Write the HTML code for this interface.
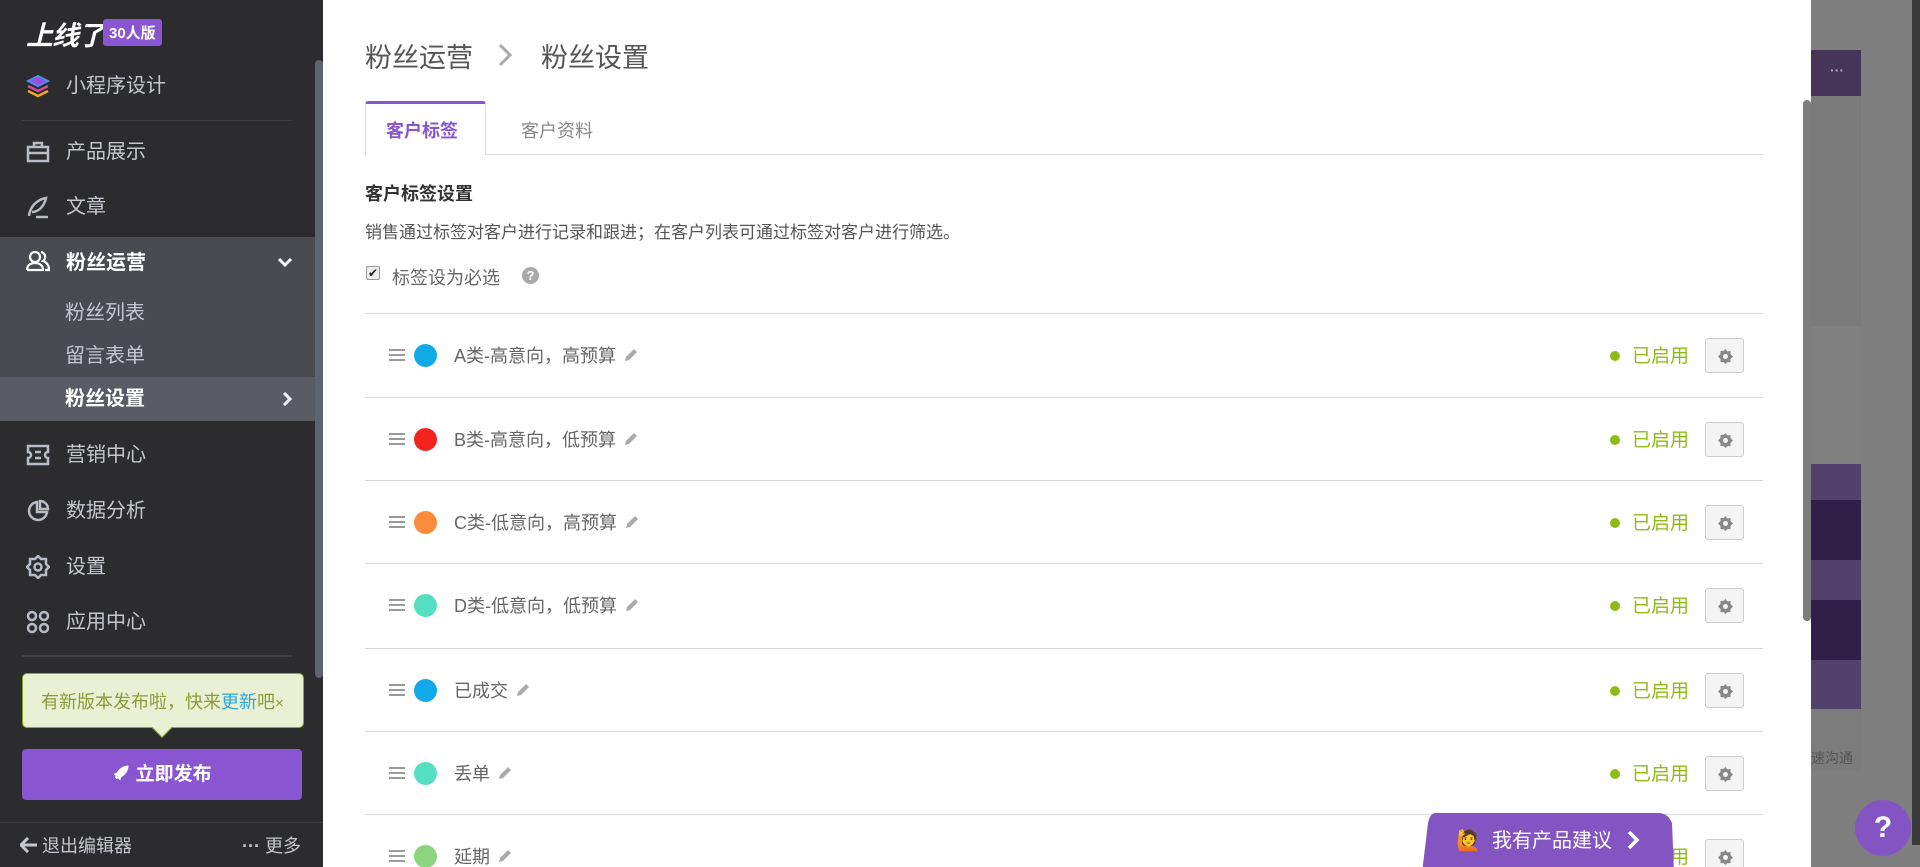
<!DOCTYPE html>
<html><head><meta charset="utf-8"><style>
*{margin:0;padding:0;box-sizing:border-box}
html,body{width:1920px;height:100%;min-height:867px;overflow:hidden;background:#7f7f7f}
body{font-family:"Liberation Sans","Noto Sans CJK SC",sans-serif;position:relative}
.a{position:absolute;white-space:nowrap}
#side{position:absolute;left:0;top:0;width:323px;height:100%;min-height:867px;background:#2c2c2e}
.mi{position:absolute;left:66px;font-size:20px;color:#c4c7ce;line-height:24px}
.ic{position:absolute;left:26px;width:24px;height:24px}
#main{position:absolute;left:323px;top:0;width:1488px;height:100%;min-height:867px;background:#fff}
.row{position:absolute;left:42px;width:1398px;height:83px;border-top:1px solid #d8d8d8}
.row .h{position:absolute;left:24px;top:35px;width:16px;height:12px;border-top:2px solid #9a9a9a;border-bottom:2px solid #9a9a9a}
.row .h:after{content:"";position:absolute;left:0;top:3px;width:16px;height:2px;background:#9a9a9a}
.row .c{position:absolute;left:49px;top:30px;width:23px;height:23px;border-radius:50%}
.row .t{position:absolute;left:89px;top:28px;font-size:18px;color:#666}
.row .t svg{vertical-align:-2px;margin-left:6px}
.row .dot{position:absolute;left:1245px;top:37px;width:10px;height:10px;border-radius:50%;background:#8fbb17}
.row .st{position:absolute;left:1267px;top:27px;font-size:19px;color:#8fbb17}
.row .g{position:absolute;left:1340px;top:24px;width:39px;height:35px;border:1px solid #ccc;border-radius:3px;background:#f4f4f4}
.row .g svg{position:absolute;left:12px;top:10px}
</style></head><body>
<div id="side">
 <div class="a" style="left:26px;top:14px;font-size:27px;font-weight:bold;color:#fff;font-style:italic;letter-spacing:-1px">上线了</div>
 <div class="a" style="left:103px;top:19px;background:#8a55d0;color:#fff;font-size:15px;font-weight:bold;padding:3px 6px;border-radius:3px">30人版</div>
 <svg class="ic" style="top:74px" viewBox="0 0 24 24"><path d="M12 2 22 7 12 12 2 7Z" fill="#9b4de0" stroke="#4a8cf0" stroke-width="2"/><path d="M2 12 12 17 22 12" fill="none" stroke="#d64aa0" stroke-width="2.5"/><path d="M2 17 12 22 22 17" fill="none" stroke="#f5a623" stroke-width="2.5"/></svg>
 <div class="mi" style="top:74px">小程序设计</div>
 <div class="a" style="left:22px;top:120px;width:270px;height:1px;background:#3d3d40"></div>
 <svg class="ic" style="top:140px" viewBox="0 0 24 24" fill="none" stroke="#b7bcc5" stroke-width="2.5"><rect x="2" y="7" width="20" height="14"/><path d="M8 7V3h8v4M2 13h20"/></svg>
 <div class="mi" style="top:140px">产品展示</div>
 <svg class="ic" style="top:195px" viewBox="0 0 24 24" fill="none" stroke="#b7bcc5" stroke-width="2.5"><path d="M3 21C4 12 10 5 20 3 18 12 12 17 6 17M10 22h12"/></svg>
 <div class="mi" style="top:195px">文章</div>
 <div class="a" style="left:0;top:237px;width:315px;height:184px;background:#4a4b50"></div>
 <div class="a" style="left:0;top:377px;width:315px;height:44px;background:#595c64"></div>
 <svg class="ic" style="top:249px" viewBox="0 0 24 24" fill="none" stroke="#fff" stroke-width="2.2"><circle cx="9" cy="8" r="5"/><path d="M1 21c0-5 4-7 8-7s8 2 8 7H1M15 3a5 5 0 0 1 2 9c3 1 6 3 6 9h-4"/></svg>
 <div class="mi" style="top:251px;color:#fff;font-weight:bold">粉丝运营</div>
 <svg class="a" style="left:277px;top:256px" width="16" height="12" viewBox="0 0 16 12"><path d="M2 3l6 6 6-6" fill="none" stroke="#fff" stroke-width="3"/></svg>
 <div class="mi" style="top:301px;left:65px">粉丝列表</div>
 <div class="mi" style="top:344px;left:65px">留言表单</div>
 <div class="mi" style="top:387px;left:65px;color:#fff;font-weight:bold">粉丝设置</div>
 <svg class="a" style="left:281px;top:391px" width="12" height="16" viewBox="0 0 12 16"><path d="M3 2l6 6-6 6" fill="none" stroke="#fff" stroke-width="3"/></svg>
 <svg class="ic" style="top:443px" viewBox="0 0 24 24" fill="none" stroke="#b7bcc5" stroke-width="2.5"><path d="M2 3h20v6a3 3 0 0 0 0 6v6H2v-6a3 3 0 0 0 0-6ZM9 9h6M9 15h6"/></svg>
 <div class="mi" style="top:443px">营销中心</div>
 <svg class="ic" style="top:499px" viewBox="0 0 24 24" fill="none" stroke="#b7bcc5" stroke-width="2.5"><path d="M11 3a9 9 0 1 0 10 10H11Z M14 2v8h8a8 8 0 0 0-8-8Z"/></svg>
 <div class="mi" style="top:499px">数据分析</div>
 <svg class="ic" style="top:555px" viewBox="0 0 24 24" fill="none" stroke="#b7bcc5" stroke-width="2.5"><path d="M12 1l3 3h5v5l3 3-3 3v5h-5l-3 3-3-3H4v-5l-3-3 3-3V4h5Z"/><circle cx="12" cy="12" r="3.5"/></svg>
 <div class="mi" style="top:555px">设置</div>
 <svg class="ic" style="top:610px" viewBox="0 0 24 24" fill="none" stroke="#b7bcc5" stroke-width="2.5"><circle cx="6" cy="6" r="4"/><circle cx="18" cy="6" r="4"/><circle cx="6" cy="18" r="4"/><circle cx="18" cy="18" r="4"/></svg>
 <div class="mi" style="top:610px">应用中心</div>
 <div class="a" style="left:22px;top:655px;width:270px;height:2px;background:#404044"></div>
 <div class="a" style="left:22px;top:673px;width:282px;height:55px;background:#eaf0d3;border:1px solid #8fa82a;border-radius:5px"></div>
 <div class="a" style="left:155px;top:721px;width:14px;height:14px;background:#eaf0d3;border-right:1px solid #8fa82a;border-bottom:1px solid #8fa82a;transform:rotate(45deg)"></div>
 <div class="a" style="left:41px;top:688px;font-size:18px;color:#8a9c3a">有新版本发布啦，快来<span style="color:#2aa7e0">更新</span>吧<span style="font-size:15px">×</span></div>
 <div class="a" style="left:22px;top:749px;width:280px;height:51px;background:#8a55d0;border-radius:4px;color:#fff;font-size:19px;font-weight:bold;text-align:center;line-height:51px"><svg width="18" height="18" viewBox="0 0 24 24" style="vertical-align:-2px"><path d="M22 2C14 2 9 7 6 12l-4 1 3 3-1 2 2 2 2-1 3 3 1-4c5-3 10-8 10-16Z" fill="#fff"/></svg> 立即发布</div>
 <div class="a" style="left:0;top:822px;width:323px;height:1px;background:#3d3d40"></div>
 <svg class="a" style="left:20px;top:837px" width="18" height="16" viewBox="0 0 18 16"><path d="M8 1 1 8l7 7M1 8h16" fill="none" stroke="#c4c7ce" stroke-width="3"/></svg>
 <div class="a" style="left:42px;top:832px;font-size:18px;color:#c4c7ce">退出编辑器</div>
 <div class="a" style="left:242px;top:832px;font-size:18px;color:#c4c7ce"><b>···</b> 更多</div>
 <div class="a" style="left:315px;top:60px;width:8px;height:618px;background:#5d6470;border-radius:4px"></div>
</div>
<div class="a" style="left:1811px;top:50px;width:50px;height:46px;background:#453558"></div>
<div class="a" style="left:1830px;top:62px;color:#aaa;font-size:14px;font-weight:bold">···</div>
<div class="a" style="left:1811px;top:96px;width:50px;height:230px;background:#7a7a7a"></div>
<div class="a" style="left:1811px;top:326px;width:50px;height:138px;background:#808080"></div>
<div class="a" style="left:1811px;top:464px;width:50px;height:245px;background:#50426a"></div>
<div class="a" style="left:1811px;top:500px;width:50px;height:60px;background:#302048"></div>
<div class="a" style="left:1811px;top:600px;width:50px;height:60px;background:#302048"></div>
<div class="a" style="left:1811px;top:709px;width:50px;height:62px;background:#7c7c7c"></div>
<div class="a" style="left:1811px;top:748px;font-size:14px;color:#555">速沟通</div>
<div class="a" style="left:1912px;top:0;width:8px;height:845px;background:#3a3a3a"></div>
<div id="main">
 <div class="a" style="left:42px;top:36px;font-size:27px;color:#555">粉丝运营</div>
 <svg class="a" style="left:174px;top:42px" width="16" height="26" viewBox="0 0 16 26"><path d="M3 3l10 10L3 23" fill="none" stroke="#aaa" stroke-width="3"/></svg>
 <div class="a" style="left:218px;top:36px;font-size:27px;color:#555">粉丝设置</div>
 <div class="a" style="left:42px;top:154px;width:1398px;height:1px;background:#ddd"></div>
 <div class="a" style="left:42px;top:101px;width:121px;height:54px;background:#fff;border:1px solid #ddd;border-bottom:none;border-top:3px solid #8a55d0;border-radius:3px 3px 0 0"></div>
 <div class="a" style="left:63px;top:117px;font-size:18px;font-weight:bold;color:#8a55d0">客户标签</div>
 <div class="a" style="left:198px;top:117px;font-size:18px;color:#888">客户资料</div>
 <div class="a" style="left:42px;top:180px;font-size:18px;font-weight:bold;color:#333">客户标签设置</div>
 <div class="a" style="left:42px;top:218px;font-size:17px;color:#555">销售通过标签对客户进行记录和跟进；在客户列表可通过标签对客户进行筛选。</div>
 <div class="a" style="left:43px;top:266px;width:14px;height:14px;border:1px solid #999;border-radius:2px;background:#eee;font-size:12px;line-height:12px;text-align:center;color:#222">✔</div>
 <div class="a" style="left:69px;top:264px;font-size:18px;color:#666">标签设为必选</div>
 <div class="a" style="left:199px;top:267px;width:17px;height:17px;border-radius:50%;background:#aaa;color:#fff;font-size:13px;font-weight:bold;text-align:center;line-height:17px">?</div>
</div>
<div id="rows" style="position:absolute;left:323px;top:0">
 <div class="row" style="top:313px"><div class="h"></div><div class="c" style="background:#12a9e8"></div><div class="t">A类-高意向，高预算<svg width="18" height="18" viewBox="0 0 18 18"><path d="M3 15l1-4 8-8 3 3-8 8Z" fill="#aaa"/></svg></div><div class="dot"></div><div class="st">已启用</div><div class="g"><svg width="15" height="15" viewBox="0 0 24 24"><path d="M12 0l3 4 5-1 0 5 4 4-4 4v5h-5l-3 3-3-3H4v-5l-4-4 4-4V3h5Z" fill="#888"/><circle cx="12" cy="12" r="4" fill="#f4f4f4"/></svg></div></div>
 <div class="row" style="top:397px"><div class="h"></div><div class="c" style="background:#f5231f"></div><div class="t">B类-高意向，低预算<svg width="18" height="18" viewBox="0 0 18 18"><path d="M3 15l1-4 8-8 3 3-8 8Z" fill="#aaa"/></svg></div><div class="dot"></div><div class="st">已启用</div><div class="g"><svg width="15" height="15" viewBox="0 0 24 24"><path d="M12 0l3 4 5-1 0 5 4 4-4 4v5h-5l-3 3-3-3H4v-5l-4-4 4-4V3h5Z" fill="#888"/><circle cx="12" cy="12" r="4" fill="#f4f4f4"/></svg></div></div>
 <div class="row" style="top:480px"><div class="h"></div><div class="c" style="background:#fa8c3c"></div><div class="t">C类-低意向，高预算<svg width="18" height="18" viewBox="0 0 18 18"><path d="M3 15l1-4 8-8 3 3-8 8Z" fill="#aaa"/></svg></div><div class="dot"></div><div class="st">已启用</div><div class="g"><svg width="15" height="15" viewBox="0 0 24 24"><path d="M12 0l3 4 5-1 0 5 4 4-4 4v5h-5l-3 3-3-3H4v-5l-4-4 4-4V3h5Z" fill="#888"/><circle cx="12" cy="12" r="4" fill="#f4f4f4"/></svg></div></div>
 <div class="row" style="top:563px"><div class="h"></div><div class="c" style="background:#55dfc2"></div><div class="t">D类-低意向，低预算<svg width="18" height="18" viewBox="0 0 18 18"><path d="M3 15l1-4 8-8 3 3-8 8Z" fill="#aaa"/></svg></div><div class="dot"></div><div class="st">已启用</div><div class="g"><svg width="15" height="15" viewBox="0 0 24 24"><path d="M12 0l3 4 5-1 0 5 4 4-4 4v5h-5l-3 3-3-3H4v-5l-4-4 4-4V3h5Z" fill="#888"/><circle cx="12" cy="12" r="4" fill="#f4f4f4"/></svg></div></div>
 <div class="row" style="top:648px"><div class="h"></div><div class="c" style="background:#12a9e8"></div><div class="t">已成交<svg width="18" height="18" viewBox="0 0 18 18"><path d="M3 15l1-4 8-8 3 3-8 8Z" fill="#aaa"/></svg></div><div class="dot"></div><div class="st">已启用</div><div class="g"><svg width="15" height="15" viewBox="0 0 24 24"><path d="M12 0l3 4 5-1 0 5 4 4-4 4v5h-5l-3 3-3-3H4v-5l-4-4 4-4V3h5Z" fill="#888"/><circle cx="12" cy="12" r="4" fill="#f4f4f4"/></svg></div></div>
 <div class="row" style="top:731px"><div class="h"></div><div class="c" style="background:#55dfc2"></div><div class="t">丢单<svg width="18" height="18" viewBox="0 0 18 18"><path d="M3 15l1-4 8-8 3 3-8 8Z" fill="#aaa"/></svg></div><div class="dot"></div><div class="st">已启用</div><div class="g"><svg width="15" height="15" viewBox="0 0 24 24"><path d="M12 0l3 4 5-1 0 5 4 4-4 4v5h-5l-3 3-3-3H4v-5l-4-4 4-4V3h5Z" fill="#888"/><circle cx="12" cy="12" r="4" fill="#f4f4f4"/></svg></div></div>
 <div class="row" style="top:814px"><div class="h"></div><div class="c" style="background:#8cd47e"></div><div class="t">延期<svg width="18" height="18" viewBox="0 0 18 18"><path d="M3 15l1-4 8-8 3 3-8 8Z" fill="#aaa"/></svg></div><div class="dot"></div><div class="st">已启用</div><div class="g"><svg width="15" height="15" viewBox="0 0 24 24"><path d="M12 0l3 4 5-1 0 5 4 4-4 4v5h-5l-3 3-3-3H4v-5l-4-4 4-4V3h5Z" fill="#888"/><circle cx="12" cy="12" r="4" fill="#f4f4f4"/></svg></div></div>
</div>
<div class="a" style="left:1803px;top:100px;width:8px;height:521px;background:#7c7c7c;border-radius:4px"></div>
<svg class="a" style="left:1422px;top:813px" width="252" height="60"><path d="M14 0H236Q246 0 250 10L252 60H0L6 10Q8 0 14 0Z" fill="#8455c2"/></svg>
<div class="a" style="left:1456px;top:824px;font-size:20px;color:#fff">🙋 &nbsp;我有产品建议</div>
<svg class="a" style="left:1626px;top:829px" width="14" height="22" viewBox="0 0 14 22"><path d="M3 3l8 8-8 8" fill="none" stroke="#fff" stroke-width="3.5"/></svg>
<div class="a" style="left:1855px;top:800px;width:56px;height:56px;border-radius:50%;background:#8455c2;color:#fff;font-size:30px;font-weight:bold;text-align:center;line-height:56px">?</div>
</body></html>
